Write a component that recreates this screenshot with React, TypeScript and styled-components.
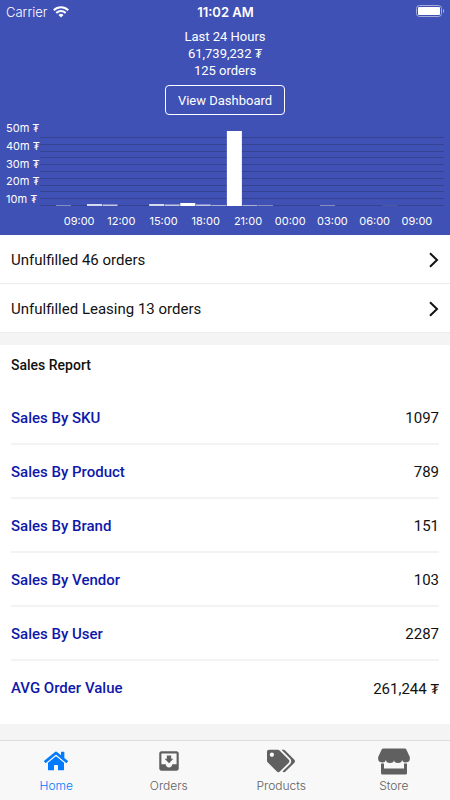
import React from "react";
import styled, { createGlobalStyle } from "styled-components";
import { FaHome, FaTags } from "react-icons/fa";
import { MdMoveToInbox } from "react-icons/md";

const GlobalStyle = createGlobalStyle`
  * { box-sizing: border-box; }
  body {
    margin: 0;
    background: #f4f4f4;
    font-family: Roboto, "Noto Sans", sans-serif;
    color: #111;
  }
  ul { list-style: none; margin: 0; padding: 0; }
  a { text-decoration: none; color: inherit; }
`;

const uiFont = `Inter, "Noto Sans", sans-serif`;

const Screen = styled.div`
  display: flex;
  flex-direction: column;
  min-height: 100vh;
`;

const Hero = styled.header`
  background: #3f51b5;
  color: #fff;
  padding-bottom: 5px;
`;

const StatusBar = styled.div`
  display: grid;
  grid-template-columns: 1fr auto 1fr;
  align-items: center;
  height: 23px;
  padding: 0 5px 0 6px;
  font-family: ${uiFont};
  font-size: 13px;
  font-weight: 300;
`;

const Carrier = styled.span`
  display: flex;
  align-items: center;
  gap: 6px;
`;

const Clock = styled.span`
  font-weight: 600;
`;

const Battery = styled.svg`
  justify-self: end;
`;

const Summary = styled.section`
  display: flex;
  flex-direction: column;
  align-items: center;
  padding-top: 5px;
  font-size: 13px;
  line-height: 17px;
`;

const DashboardButton = styled.button`
  margin-top: 6px;
  height: 30px;
  width: 120px;
  padding: 0;
  border: 1px solid #fff;
  border-radius: 4px;
  background: transparent;
  color: #fff;
  font: inherit;
`;

const Chart = styled.figure`
  margin: 5px 0 0;
  font-family: ${uiFont};
  font-size: 11px;
`;

const Plot = styled.div`
  display: grid;
  grid-template-columns: 34px 1fr;
  padding: 0 6px 0 6px;
`;

const AxisY = styled.div`
  display: flex;
  flex-direction: column;
  justify-content: space-between;
  height: 86px;
  padding-top: 1px;
  line-height: 14px;
  white-space: nowrap;
`;

const PlotArea = styled.svg`
  display: block;
  width: 100%;
  height: 86px;
`;

const AxisX = styled.div`
  display: grid;
  grid-template-columns: repeat(9, 1fr);
  padding: 7px 12px 0 58px;
  line-height: 17px;
  text-align: center;
`;

const LinkRow = styled.a`
  display: flex;
  align-items: center;
  justify-content: space-between;
  height: 49px;
  padding: 1px 11px 0;
  background: #fff;
  border-bottom: 1px solid #ececec;
  font-size: 15px;
`;

const Report = styled.section`
  margin-top: 12px;
  padding: 0 11px 9px;
  background: #fff;
`;

const ReportTitle = styled.h2`
  margin: 0;
  padding: 10px 0 16px;
  font-size: 14px;
  font-weight: 500;
  line-height: 20px;
`;

const ReportRow = styled.li`
  display: flex;
  align-items: center;
  justify-content: space-between;
  height: 54px;
  padding-top: 2px;
  border-bottom: 2px solid #f3f3f3;
  font-size: 15px;

  &:last-child { border-bottom-color: transparent; }
`;

const ReportLink = styled.a`
  color: #0e18aa;
  font-weight: 500;
`;

const TabBar = styled.nav`
  position: sticky;
  bottom: 0;
  display: grid;
  grid-template-columns: repeat(4, 1fr);
  height: 60px;
  margin-top: auto;
  background: #f8f8f8;
  border-top: 1px solid #dedede;
  font-family: ${uiFont};
  font-size: 12px;
  font-weight: 300;
`;

const Tab = styled.a<{ $active?: boolean }>`
  display: flex;
  flex-direction: column;
  align-items: center;
  padding-top: 6px;
  color: ${(p) => (p.$active ? "#007aff" : "#606060")};
  line-height: 16px;
`;

const TabIcon = styled.span`
  display: flex;
  align-items: center;
  justify-content: center;
  height: 28px;
  margin-bottom: 3px;
`;

const WifiIcon = () => (
  <svg width="16" height="12" viewBox="0 0 16 12" fill="none" stroke="#fff" strokeWidth="2" aria-hidden="true">
    <path d="M.8 4.3a10.3 10.3 0 0 1 14.4 0" />
    <path d="M3.3 7a6.7 6.7 0 0 1 9.4 0" />
    <path d="M8 11.4 5.5 8.9a3.6 3.6 0 0 1 5 0z" fill="#fff" stroke="none" />
  </svg>
);

const BatteryIcon = () => (
  <Battery width="29" height="13" viewBox="0 0 29 13" aria-label="Battery full">
    <rect x=".5" y=".5" width="25" height="11" rx="3" fill="none" stroke="#a5aedb" />
    <rect x="2" y="2" width="22" height="8" rx="1" fill="#fff" />
    <path d="M27 4c1.600.6 1.600 3.600 0 4.200z" fill="#a5aedb" />
  </Battery>
);

const ChevronIcon = () => (
  <svg width="10" height="16" viewBox="0 0 10 16" fill="none" stroke="#111" strokeWidth="2" aria-hidden="true">
    <path d="M1 1.3 8 8l-7 6.700" />
  </svg>
);

const StoreIcon = () => (
  <svg width="32" height="27" viewBox="0 0 32 27" fill="currentColor" aria-hidden="true">
    <path d="M5.2 .5H26.800Q27.700 .5 28.200 1.300L31.600 8.500Q32 9.400 31.800 10.500A4 3.600 0 0 1 24 11.900A4 3 0 0 1 16 11.900A4 3 0 0 1 8 11.900A4 3.600 0 0 1 .2 10.500Q0 9.400 .4 8.500L3.800 1.300Q4.300 .5 5.200 .5Z" />
    <path d="M3 15.500H6V20.500H26V15.500H29V25Q29 26.500 27.500 26.500H4.500Q3 26.500 3 25Z" />
  </svg>
);

const yLabels = ["50m ₮", "40m ₮", "30m ₮", "20m ₮", "10m ₮"];
const xLabels = ["09:00", "12:00", "15:00", "18:00", "21:00", "00:00", "03:00", "06:00", "09:00"];

type Bar = { slot: number; height: number; opacity: number };
const bars: Bar[] = [
  { slot: 1, height: 1, opacity: 0.4 },
  { slot: 3, height: 2, opacity: 0.8 },
  { slot: 4, height: 1.5, opacity: 0.7 },
  { slot: 7, height: 2, opacity: 0.8 },
  { slot: 8, height: 1.5, opacity: 0.7 },
  { slot: 9, height: 3, opacity: 1 },
  { slot: 10, height: 1.5, opacity: 0.7 },
  { slot: 11, height: 1, opacity: 0.6 },
  { slot: 12, height: 75, opacity: 1 },
  { slot: 13, height: 1, opacity: 0.6 },
  { slot: 14, height: 1, opacity: 0.4 },
  { slot: 18, height: 1, opacity: 0.4 },
  { slot: 22, height: 1, opacity: 0.12 },
];

const SalesChart = () => (
  <Chart aria-label="Sales per hour">
    <Plot>
      <AxisY>
        {yLabels.map((label) => (
          <span key={label}>{label}</span>
        ))}
      </AxisY>
      <PlotArea viewBox="0 0 404 86" preserveAspectRatio="none">
        {Array.from({ length: 11 }, (_, i) => (
          <rect key={i} x="0" y={Math.round(17 + i * 6.8)} width="404" height="1" fill="#344392" />
        ))}
        {bars.map((bar) => (
          <rect
            key={bar.slot}
            x={bar.slot * 15.54 + 0.4}
            y={86 - bar.height}
            width="15"
            height={bar.height}
            fill="#fff"
            opacity={bar.opacity}
          />
        ))}
      </PlotArea>
    </Plot>
    <AxisX>
      {xLabels.map((label, i) => (
        <span key={i}>{label}</span>
      ))}
    </AxisX>
  </Chart>
);

const reports = [
  { name: "Sales By SKU", value: "1097" },
  { name: "Sales By Product", value: "789" },
  { name: "Sales By Brand", value: "151" },
  { name: "Sales By Vendor", value: "103" },
  { name: "Sales By User", value: "2287" },
  { name: "AVG Order Value", value: "261,244 ₮" },
];

const tabs = [
  { name: "Home", icon: <FaHome size={24} />, active: true },
  { name: "Orders", icon: <MdMoveToInbox size={26} /> },
  { name: "Products", icon: <FaTags size={28} /> },
  { name: "Store", icon: <StoreIcon /> },
];

export default function App() {
  return (
    <Screen>
      <GlobalStyle />
      <Hero>
        <StatusBar>
          <Carrier>
            Carrier
            <WifiIcon />
          </Carrier>
          <Clock>11:02 AM</Clock>
          <BatteryIcon />
        </StatusBar>
        <Summary>
          <span>Last 24 Hours</span>
          <span>61,739,232 ₮</span>
          <span>125 orders</span>
          <DashboardButton type="button">View Dashboard</DashboardButton>
        </Summary>
        <SalesChart />
      </Hero>
      <main>
        <LinkRow href="#unfulfilled">
          Unfulfilled 46 orders
          <ChevronIcon />
        </LinkRow>
        <LinkRow href="#unfulfilled-leasing">
          Unfulfilled Leasing 13 orders
          <ChevronIcon />
        </LinkRow>
        <Report>
          <ReportTitle>Sales Report</ReportTitle>
          <ul>
            {reports.map((report) => (
              <ReportRow key={report.name}>
                <ReportLink href="#report">{report.name}</ReportLink>
                <span>{report.value}</span>
              </ReportRow>
            ))}
          </ul>
        </Report>
      </main>
      <TabBar>
        {tabs.map((tab) => (
          <Tab key={tab.name} href="#tab" $active={tab.active}>
            <TabIcon>{tab.icon}</TabIcon>
            {tab.name}
          </Tab>
        ))}
      </TabBar>
    </Screen>
  );
}
